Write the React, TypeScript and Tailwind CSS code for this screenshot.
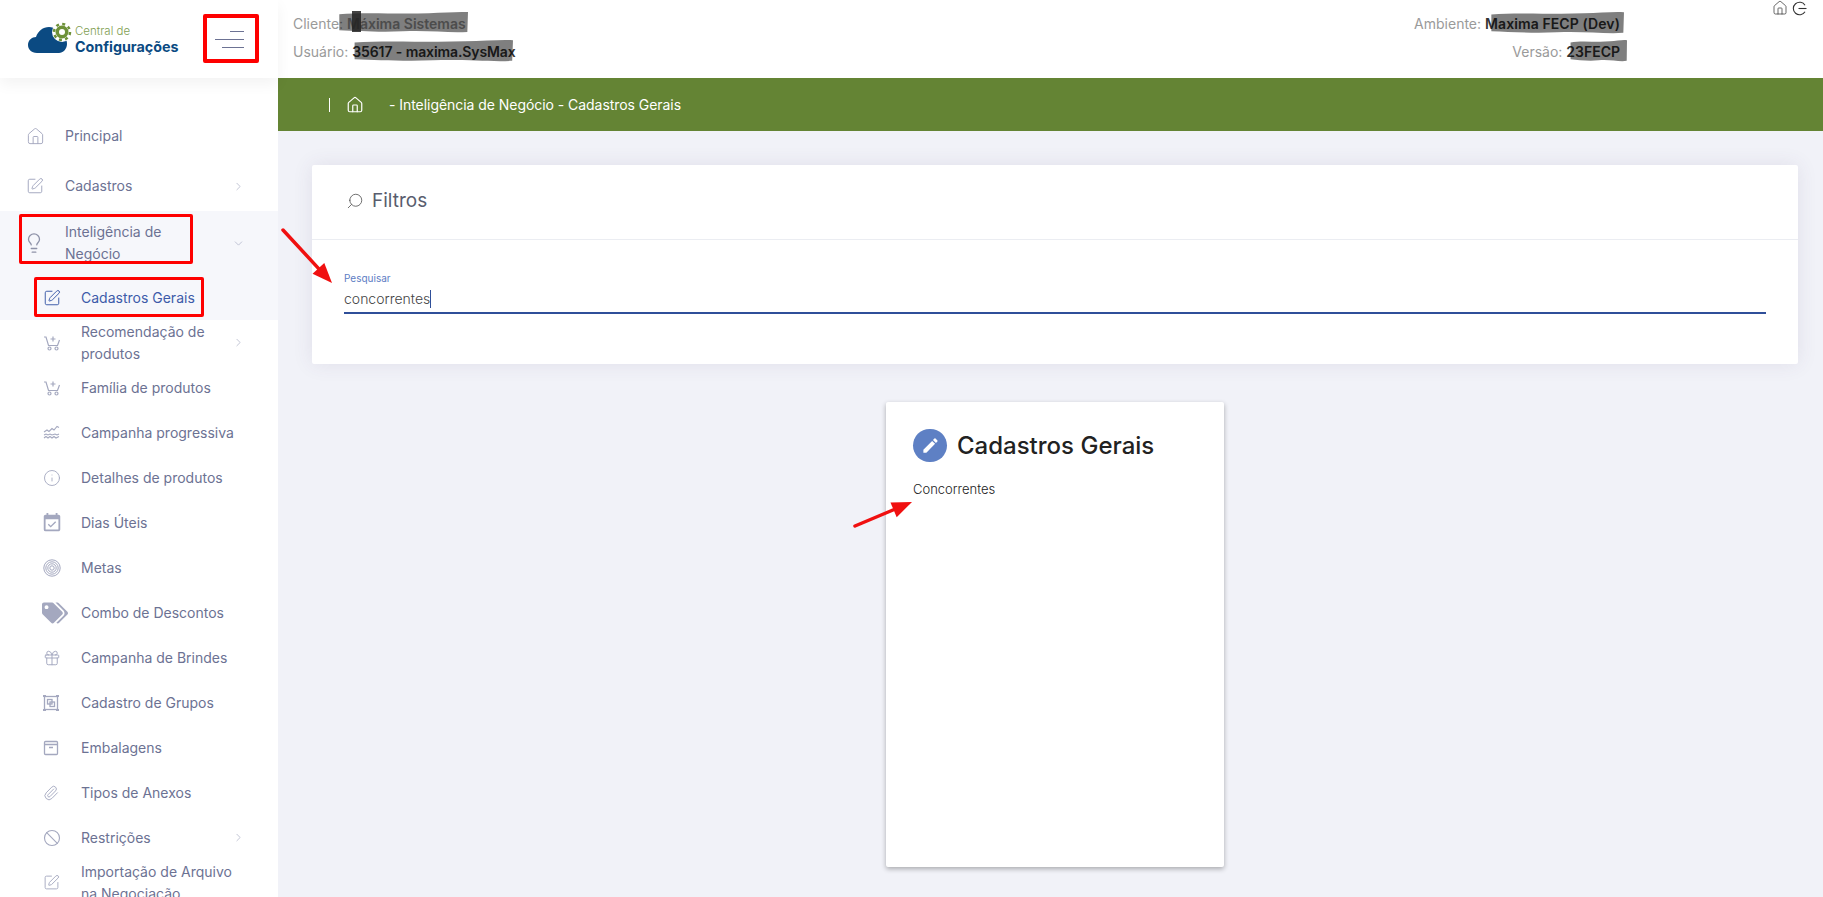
// App.tsx
import React from "react";
import {
  Ban,
  ChevronDown,
  ChevronRight,
  Gift,
  House,
  Info,
  Lightbulb,
  Paperclip,
  Search,
  SquarePen,
} from "lucide-react";
import { FaTags } from "react-icons/fa";
import { MdEdit, MdEventAvailable } from "react-icons/md";

const CartPlus = () => (
  <svg width="18" height="18" viewBox="0 0 18 18" fill="none" stroke="currentColor" strokeWidth="1.200">
    <path d="M1 3h2l2.500 8.500h9L16.500 6" />
    <path d="M10 2.500v5M7.500 5h5" />
    <circle cx="6.500" cy="14.500" r="1.500" />
    <circle cx="13.500" cy="14.500" r="1.500" />
  </svg>
);

const Waves = () => (
  <svg width="18" height="16" viewBox="0 0 18 16" fill="none" stroke="currentColor" strokeWidth="1.100">
    <path d="M1 7l3-2 2 1.500 3-3 2 1.500 3-3.500 2 1" />
    <path d="M1 13l2-1.500 2 1.500 2-1.500 2 1.500 2-1.500 2 1.500 3-1.500" />
    <path d="M1 10l2-1 2 1 2-1 2 1 3-1 2 1 2-1" />
  </svg>
);

const Target = () => (
  <svg width="18" height="18" viewBox="0 0 18 18" fill="none" stroke="currentColor" strokeWidth="1">
    <circle cx="9" cy="9" r="8.200" />
    <circle cx="9" cy="9" r="6.200" />
    <circle cx="9" cy="9" r="4.200" />
    <circle cx="9" cy="9" r="2.200" />
  </svg>
);

const Groups = () => (
  <svg width="16" height="16" viewBox="0 0 16 16" fill="none" stroke="currentColor" strokeWidth="1.300">
    <rect x="1.500" y="1.500" width="13" height="13" />
    <rect x="4.500" y="4.500" width="4.500" height="4.500" />
    <rect x="7" y="7" width="4.500" height="4.500" />
    <path d="M0 1h3M13 1h3M0 15h3M13 15h3" strokeWidth="1.800" />
  </svg>
);

const Box = () => (
  <svg width="16" height="16" viewBox="0 0 16 16" fill="none" stroke="currentColor" strokeWidth="1.300">
    <rect x="1.500" y="1.500" width="13" height="13" rx="1" />
    <path d="M1.500 4.500h13M6 7.500h4" />
  </svg>
);

const iconCls = "text-[#a4a8bf]";

type Item = {
  label: React.ReactNode;
  icon: React.ReactNode;
  chevron?: boolean;
};

const subItems: Item[] = [
  { label: "Recomendação de produtos", icon: <CartPlus />, chevron: true },
  { label: "Família de produtos", icon: <CartPlus /> },
  { label: "Campanha progressiva", icon: <Waves /> },
  { label: "Detalhes de produtos", icon: <Info size={18} strokeWidth={1.200} /> },
  { label: "Dias Úteis", icon: <MdEventAvailable size={22} className="-ml-[2px]" /> },
  { label: "Metas", icon: <Target /> },
  { label: "Combo de Descontos", icon: <FaTags size={26} className="-ml-[1px]" /> },
  { label: "Campanha de Brindes", icon: <Gift size={18} strokeWidth={1.300} /> },
  { label: "Cadastro de Grupos", icon: <Groups /> },
  { label: "Embalagens", icon: <Box /> },
  { label: "Tipos de Anexos", icon: <Paperclip size={16} strokeWidth={1.400} /> },
  { label: "Restrições", icon: <Ban size={18} strokeWidth={1.500} />, chevron: true },
  { label: "Importação de Arquivo na Negociação", icon: <SquarePen size={17} strokeWidth={1.300} /> },
];

const Sidebar: React.FC = () => (
  <aside className="w-[278px] shrink-0 overflow-hidden bg-white pt-[33px] text-[14px] leading-[22px] text-[#6c7293]">
    <div className="flex h-[50px] items-center pl-[26px] pr-[33px]">
      <span className={`w-[39px] ${iconCls}`}>
        <House size={19} strokeWidth={1.200} />
      </span>
      <span>Principal</span>
    </div>
    <div className="flex h-[50px] items-center pl-[26px] pr-[33px]">
      <span className={`w-[39px] ${iconCls}`}>
        <SquarePen size={18} strokeWidth={1.300} />
      </span>
      <span className="flex-1">Cadastros</span>
      <ChevronRight size={13} strokeWidth={1.200} className={iconCls} />
    </div>
    <div className="bg-[#f6f7fb]">
      <div className="flex h-[64px] items-center pl-[23px] pr-[33px]">
        <span className="w-[42px] text-[#8e92a8]">
          <Lightbulb size={22} strokeWidth={1.400} />
        </span>
        <span className="flex-1 leading-[22px]">
          Inteligência de
          <br />
          Negócio
        </span>
        <ChevronDown size={13} strokeWidth={1.200} className={iconCls} />
      </div>
      <div className="flex h-[45px] items-center pl-[43px] text-[#3d5ba9]">
        <span className="w-[38px]">
          <SquarePen size={18} strokeWidth={1.300} />
        </span>
        <span>Cadastros Gerais</span>
      </div>
    </div>
    {subItems.map((item, i) => (
      <div key={i} className="flex h-[45px] items-center pl-[43px] pr-[33px]">
        <span className={`flex w-[38px] shrink-0 ${iconCls}`}>{item.icon}</span>
        <span className="flex-1 pr-[3px]">{item.label}</span>
        {item.chevron && <ChevronRight size={13} strokeWidth={1.200} className={iconCls} />}
      </div>
    ))}
  </aside>
);

const Logo = () => (
  <div className="flex items-center">
    <svg width="48" height="34" viewBox="0 0 48 34">
      <path
        d="M10 31C4 31 1 27 1 23C1 18 5 15 9 15C11 9 16 5 22 5C28 5 32 9 34 13C38 14 40 18 40 22C40 27 36 31 32 31Z"
        fill="#0b4a82"
      />
      <circle cx="35" cy="10" r="10" fill="#fff" />
      <circle cx="35" cy="10" r="8" fill="none" stroke="#6d9138" strokeWidth="2.500" strokeDasharray="3 3.280" />
      <circle cx="35" cy="10" r="6.500" fill="#6d9138" />
      <circle cx="35" cy="10" r="3" fill="#fff" />
    </svg>
    <div className="flex flex-col">
      <span className="text-[11.500px] leading-[14px] font-light text-[#7f9e52]">Central de</span>
      <span className="text-[14.300px] leading-[17px] font-bold text-[#0b4a82]">Configurações</span>
    </div>
  </div>
);

const Header: React.FC = () => (
  <header className="relative z-10 flex h-[78px] shrink-0 bg-white text-[14px] text-[#9a9a9a]">
    <div className="flex w-[278px] shrink-0 items-center justify-between pl-[27px] pr-[34px] shadow-[0_6px_14px_rgba(0,0,0,0.05)]">
      <Logo />
      <div className="flex w-[29px] flex-col items-end gap-[7px]">
        <span className="h-px w-[14px] bg-[#6c7293]" />
        <span className="h-px w-[29px] bg-[#6c7293]" />
        <span className="h-px w-[22px] bg-[#6c7293]" />
      </div>
    </div>
    <div className="flex flex-1 justify-between pl-[15px] pr-[203px] pt-[14px]">
      <div className="flex flex-col gap-[8px] leading-[20px]">
        <div>
          Cliente: <b className="font-semibold text-[#999]">Máxima Sistemas</b>
        </div>
        <div>
          Usuário: <b className="font-semibold tracking-[-0.1px] text-[#333]">35617 - maxima.SysMax</b>
        </div>
      </div>
      <div className="flex flex-col items-end gap-[8px] leading-[20px]">
        <div>
          Ambiente: <b className="font-semibold tracking-[0.1px] text-[#333]">Maxima FECP (Dev)</b>
        </div>
        <div>
          Versão: <b className="font-semibold text-[#333]">23FECP</b>
        </div>
      </div>
    </div>
    <div className="absolute right-[16px] top-[0px] flex items-center gap-[4px] text-[#333]">
      <House size={16} strokeWidth={1.100} />
      <svg width="15" height="15" viewBox="0 0 15 15" fill="none" stroke="currentColor" strokeWidth="1.100">
        <path d="M13 4.200A6.300 6.300 0 1 0 13 10.800" />
        <path d="M6.500 7.500h8" />
      </svg>
    </div>
  </header>
);

const Main: React.FC = () => (
  <main className="flex flex-1 flex-col bg-[#f1f2f8]">
    <div className="flex h-[53px] shrink-0 items-center bg-[#648434] pl-[51px] text-[14px] text-white">
      <span className="h-[14px] w-px bg-white" />
      <House size={18} strokeWidth={1.600} className="ml-[16px]" />
      <span className="ml-[25px] tracking-[-0.05px]">- Inteligência de Negócio - Cadastros Gerais</span>
    </div>
    <div className="flex flex-1 flex-col pl-[34px] pr-[25px] pt-[34px]">
      <section className="h-[199px] w-full rounded-[2px] bg-white shadow-[0_0_20px_rgba(82,63,105,0.1)]">
        <div className="flex h-[75px] items-center gap-[8px] border-b border-[#ebedf2] pb-[2px] pl-[34px]">
          <Search size={18} strokeWidth={1.100} className="-scale-x-100 text-[#555]" />
          <span className="text-[19px] text-[#595d6e]">Filtros</span>
        </div>
        <div className="px-[32px] pt-[32px]">
          <label className="block text-[10px] leading-[12px] text-[#5d7dc4]">Pesquisar</label>
          <div className="mt-[3px] box-content flex h-[23px] items-center border-b-2 border-[#2f4f99] pb-[2px] text-[14px] font-light text-[#444]">
            concorrentes
            <span className="h-[18px] w-px bg-[#2f4f99]" />
          </div>
        </div>
      </section>
      <section className="ml-[574px] mt-[38px] h-[465px] w-[338px] rounded-[2px] bg-white pl-[27px] pt-[27px] shadow-[0_2px_5px_rgba(0,0,0,0.3)]">
        <div className="flex h-[33px] items-center gap-[10px]">
          <span className="flex h-[33px] w-[34px] items-center justify-center rounded-full bg-[#5e80c4] text-white">
            <MdEdit size={19} />
          </span>
          <span className="text-[24px] font-medium text-[#222]">Cadastros Gerais</span>
        </div>
        <p className="mt-[17px] text-[13px] leading-[20px] font-light text-[#222]">Concorrentes</p>
      </section>
    </div>
  </main>
);

// annotations drawn over the screenshot
const Mark: React.FC<{ className: string }> = ({ className }) => (
  <span className={`absolute z-20 rounded-[2px] border-[3px] border-[#fe0000] ${className}`} />
);

const Blob: React.FC<{ className: string }> = ({ className }) => (
  <svg className={`absolute z-20 ${className}`} viewBox="0 0 100 20" preserveAspectRatio="none">
    <path
      d="M1 3C20 1 45 3 70 2C82 1.500 92 0.500 100 1L99.500 19C85 20 70 17.500 50 18.500C30 19.500 15 18 1 17.500Z"
      fill="rgba(0,0,0,0.5)"
    />
  </svg>
);

const Arrow: React.FC<{ className: string; x1: number; y1: number; x2: number; y2: number; w: number; h: number }> = ({
  className,
  x1,
  y1,
  x2,
  y2,
  w,
  h,
}) => {
  const a = Math.atan2(y2 - y1, x2 - x1);
  const bx = x2 - Math.cos(a) * 20;
  const by = y2 - Math.sin(a) * 20;
  const nx = -Math.sin(a) * 8;
  const ny = Math.cos(a) * 8;
  return (
    <svg className={`absolute z-20 ${className}`} width={w} height={h}>
      <line x1={x1} y1={y1} x2={bx} y2={by} stroke="#f01010" strokeWidth="3.500" strokeLinecap="round" />
      <polygon points={`${x2},${y2} ${bx + nx},${by + ny} ${bx - nx},${by - ny}`} fill="#f01010" />
    </svg>
  );
};

const App: React.FC = () => (
  <div className="relative flex h-[897px] w-full flex-col overflow-hidden bg-white font-['Inter',sans-serif]">
    <Header />
    <div className="flex min-h-0 flex-1">
      <Sidebar />
      <Main />
    </div>
    <Blob className="left-[338px] top-[11px] h-[22px] w-[130px]" />
    <span className="absolute left-[352px] top-[11px] z-20 h-[21px] w-[9px] bg-[#222]/85" />
    <Blob className="left-[353px] top-[39px] h-[23px] w-[160px]" />
    <Blob className="left-[1490px] top-[11px] h-[23px] w-[134px]" />
    <Blob className="left-[1570px] top-[39px] h-[23px] w-[57px]" />
    <Mark className="left-[203px] top-[14px] h-[49px] w-[56px] border-[4px]" />
    <Mark className="left-[19px] top-[214px] h-[50px] w-[174px]" />
    <Mark className="left-[34px] top-[277px] h-[40px] w-[170px]" />
    <Arrow className="left-[280px] top-[225px]" w={56} h={62} x1={3} y1={5} x2={52} y2={58} />
    <Arrow className="left-[850px] top-[495px]" w={70} h={40} x1={5} y1={31} x2={62} y2={7} />
  </div>
);

export default App;
